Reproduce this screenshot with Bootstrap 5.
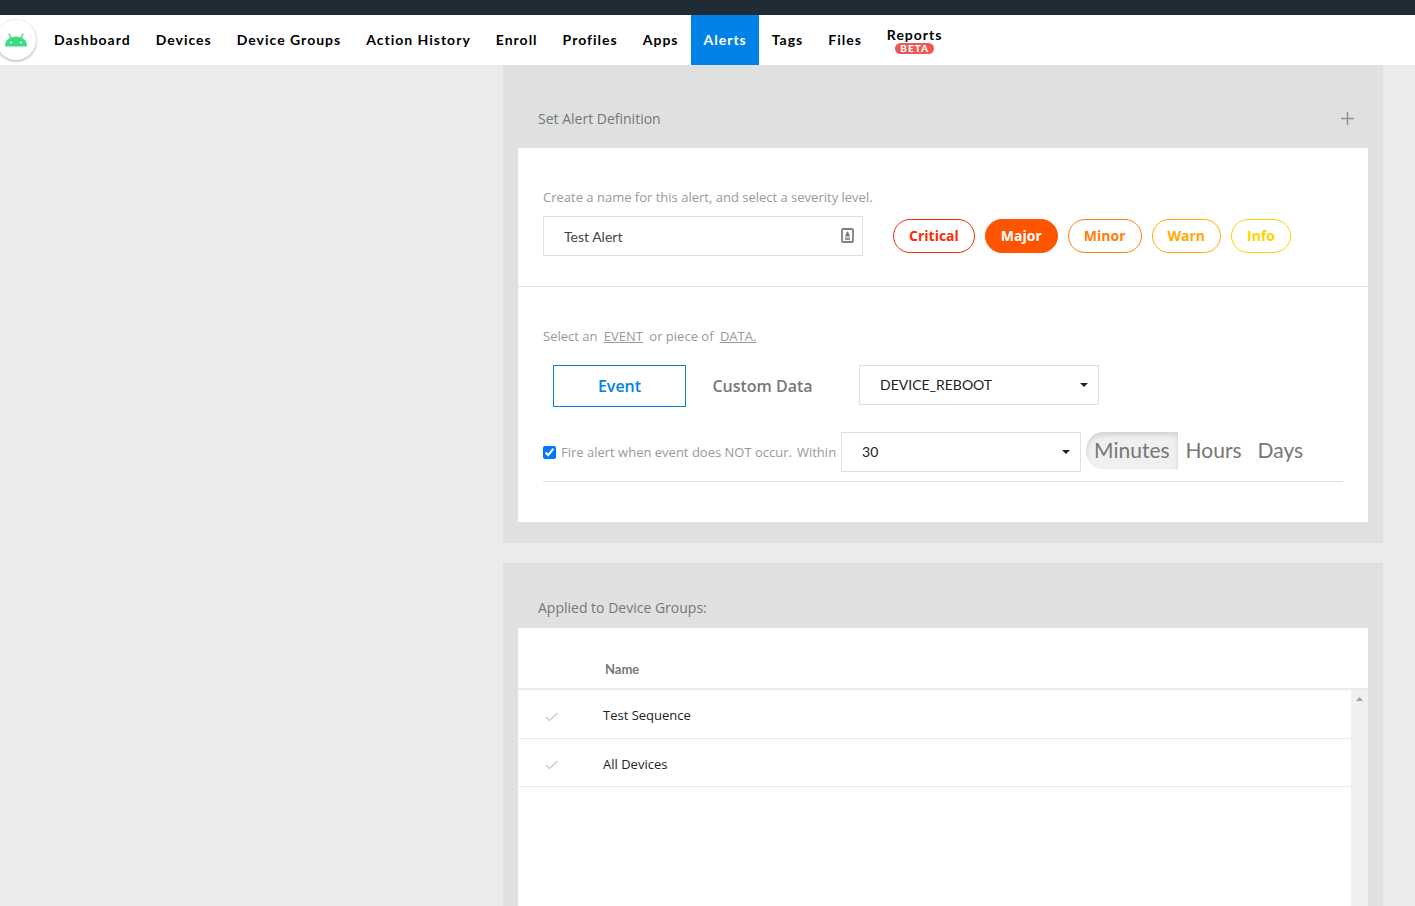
<!DOCTYPE html>
<html lang="en">
<head>
<meta charset="utf-8">
<meta name="viewport" content="width=device-width, initial-scale=1">
<title>Alerts</title>
<link href="https://cdn.jsdelivr.net/npm/bootstrap@5.3.0/dist/css/bootstrap.min.css" rel="stylesheet">
<style>
  body { background: #ebebeb; color: #7a7a7a; font: 13px/20px "Open Sans", sans-serif; }
  .topstrip { height: 15px; background: #1f2c35; }
  .mainnav { height: 50px; background: #fff; }
  .logo-disc { width: 40px; height: 40px; margin-left: -4px; border-radius: 50%; background: #fff; box-shadow: 0 1px 3px rgba(0,0,0,.35); }
  .mainnav .nav { margin-left: 5px; }
  .mainnav .nav-link { height: 50px; padding: 0 12px 0 13px; color: #000; font: 700 14px/16px Lato, sans-serif; letter-spacing: 1px; }
  .mainnav .nav-link.active { background: #0082e6; color: #fff; }
  .beta-tag { padding: 0 5px; border-radius: 6px; background: #f25555; color: #fff; font-size: 10px; line-height: 11px; font-weight: 900; }
  .workspace { width: 100%; max-width: 912px; padding-right: 32px; gap: 20px; }
  .panel { background: #dfe1e0; padding: 0 15px; }
  .panel-title { font-size: 14px; line-height: 20px; color: #777; margin: 0; font-weight: 400; }
  .panel-head { padding: 44px 13px 19px 20px; }
  .panel-head-tight { padding: 35px 13px 10px 20px; }
  .panel-first { padding-bottom: 21px; }
  .sheet { background: #fff; }
  .hint { color: #999; }
  .hint a { color: #999; margin: 0 3px; }
  .name-block { padding: 39px 25px 30px; border-bottom: 1px solid #dfe1e0; }
  .name-label { margin-bottom: 9px; }
  .severity { gap: 10px; margin-left: 30px; }
  .event-block { padding: 39px 25px 40px; }
  .field { height: 40px; border: 1px solid #dfe1e0; border-radius: 0; padding: 0 20px; color: #444; background-color: #fff; font: 14px/20px Lato, sans-serif; }
  .name-field { width: 320px; }
  .field-icon { right: 9px; top: 12px; }
  select.field { width: 240px; color: #222; background-image: url("data:image/svg+xml,%3Csvg xmlns='http://www.w3.org/2000/svg' viewBox='0 0 8 4'%3E%3Cpath d='M0 0h8L4 4z' fill='%23222'/%3E%3C/svg%3E"); background-size: 8px 4px; background-position: right 10px center; }
  .sev { height: 34px; padding: 0 15px; border-radius: 17px; font-size: 14px; line-height: 20px; font-weight: 700; border: 1px solid var(--tone); color: var(--tone); }
  .sev:hover, .sev.active { background: var(--tone) !important; border-color: var(--tone) !important; color: #fff !important; }
  .critical { --tone: #fa2d05; } .major { --tone: #ff5500; } .minor { --tone: #ff7f0e; } .warn { --tone: #ffa800; } .info { --tone: #ffd200; }
  .kind { width: 133px; height: 42px; border-radius: 0; font-size: 16px; font-weight: 600; color: #777; padding: 0; }
  .kind.active { border: 1px solid #0082d8 !important; background: #fff !important; color: #0082e6 !important; }
  .kind-row { padding-left: 10px; margin-top: 19px; gap: 10px; }
  .kind-row .field { margin-left: 20px; }
  .fire-row { margin-top: 25px; padding-bottom: 9px; border-bottom: 1px solid #dfe1e0; gap: 5px; }
  .fire-row input { width: 13px; height: 13px; accent-color: #0075ff; }
  .unit { height: 37px; padding: 0 8px 2px; border: 0; border-radius: 0; color: #777; font: 21px/35px Lato, sans-serif; }
  .unit.active { border-radius: 18px 0 0 18px; background: #f0f0f0 !important; color: #777 !important; box-shadow: inset 0 3px 5px #cfd3d3; }
  .groups { --bs-table-bg: transparent; margin: 0; color: #222; }
  .groups th { height: 61px; padding: 31px 2px 0; vertical-align: top; border-bottom: 2px solid #ebebeb; font: 700 13px/20px Lato, sans-serif; color: #777; }
  .groups td { height: 48px; padding: 3px 0 0; border-bottom: 1px solid #ebebeb; color: #222; vertical-align: middle; }
  .groups tbody tr:first-child td { height: 49px; }
  .groups .tick { width: 85px; padding-left: 27px; }
  .scrolltrack { top: 62px; right: 0; bottom: 0; width: 17px; padding-top: 7px; background: #f0f0f0; }
</style>
</head>
<body class="d-flex flex-column min-vh-100">
<div class="topstrip"></div>
<header class="mainnav d-flex align-items-center">
  <a href="#" class="logo-disc d-flex flex-shrink-0 align-items-center justify-content-center" aria-label="Home">
    <svg width="22" height="14" viewBox="0 0 22 14"><path d="M0 13.500C0 6.500 5 3.500 11 3.500s11 3 11 10z" fill="#3ddc84"/><path d="M4 1l3 5M18 1l-3 5" stroke="#3ddc84" stroke-width="1.400" stroke-linecap="round"/><circle cx="6" cy="9.500" r="1" fill="#fff"/><circle cx="16" cy="9.500" r="1" fill="#fff"/></svg>
  </a>
  <nav class="nav flex-nowrap" aria-label="Main">
    <a class="nav-link d-flex align-items-center" href="#">Dashboard</a>
    <a class="nav-link d-flex align-items-center" href="#">Devices</a>
    <a class="nav-link d-flex align-items-center text-nowrap" href="#">Device Groups</a>
    <a class="nav-link d-flex align-items-center text-nowrap" href="#">Action History</a>
    <a class="nav-link d-flex align-items-center" href="#">Enroll</a>
    <a class="nav-link d-flex align-items-center" href="#">Profiles</a>
    <a class="nav-link d-flex align-items-center" href="#">Apps</a>
    <a class="nav-link active d-flex align-items-center" aria-current="page" href="#">Alerts</a>
    <a class="nav-link d-flex align-items-center" href="#">Tags</a>
    <a class="nav-link d-flex align-items-center" href="#">Files</a>
    <a class="nav-link d-flex flex-column align-items-center justify-content-center" href="#">Reports<span class="beta-tag">BETA</span></a>
  </nav>
</header>

<main class="workspace ms-auto d-flex flex-column flex-grow-1">
  <section class="panel panel-first">
    <div class="panel-head d-flex justify-content-between align-items-center">
      <h2 class="panel-title">Set Alert Definition</h2>
      <button type="button" class="btn p-0 border-0 d-flex" aria-label="Add">
        <svg width="16" height="16" viewBox="0 0 16 16"><path d="M8.500 1v13M2 7.500h13" stroke="#929292" stroke-width="1.500"/></svg>
      </button>
    </div>
    <div class="sheet">
      <div class="name-block">
        <label class="name-label hint d-block" for="alertName">Create a name for this alert, and select a severity level.</label>
        <div class="d-flex flex-wrap align-items-center">
          <div class="name-field position-relative">
            <input id="alertName" class="field w-100" type="text" value="Test Alert">
            <svg class="field-icon position-absolute" width="13" height="16" viewBox="0 0 13 16"><rect x="1" y="1" width="11" height="13" rx="1" fill="none" stroke="#808080" stroke-width="1.800"/><path d="M6.500 3l1.300 2.500L9 8.500H4l1.200-3z" fill="#777"/><path d="M4 9.500h5v2.500H4z" fill="#999"/></svg>
          </div>
          <div class="severity d-flex">
            <button type="button" class="btn sev critical">Critical</button>
            <button type="button" class="btn sev major active">Major</button>
            <button type="button" class="btn sev minor">Minor</button>
            <button type="button" class="btn sev warn">Warn</button>
            <button type="button" class="btn sev info">Info</button>
          </div>
        </div>
      </div>
      <div class="event-block">
        <div class="hint">Select an <a href="#">EVENT</a> or piece of <a href="#">DATA.</a></div>
        <div class="kind-row d-flex flex-wrap">
          <button type="button" class="btn kind active">Event</button>
          <button type="button" class="btn kind">Custom Data</button>
          <select class="form-select field" aria-label="Event type"><option>DEVICE_REBOOT</option></select>
        </div>
        <div class="fire-row d-flex flex-wrap align-items-center">
          <input type="checkbox" id="fire" checked>
          <label class="hint" for="fire">Fire alert when event does NOT occur.</label>
          <label class="hint" for="within">Within</label>
          <select id="within" class="form-select field"><option>30</option></select>
          <div class="d-flex align-self-start" role="group" aria-label="Time unit">
            <button type="button" class="btn unit active">Minutes</button>
            <button type="button" class="btn unit">Hours</button>
            <button type="button" class="btn unit">Days</button>
          </div>
        </div>
      </div>
    </div>
  </section>

  <section class="panel d-flex flex-column flex-grow-1">
    <div class="panel-head-tight"><h2 class="panel-title" id="groupsTitle">Applied to Device Groups:</h2></div>
    <div class="sheet position-relative flex-grow-1">
      <table class="table groups" aria-labelledby="groupsTitle">
        <thead><tr><th class="tick"></th><th>Name</th></tr></thead>
        <tbody>
          <tr><td class="tick"><svg width="14" height="10" viewBox="0 0 14 10"><path d="M1 5l3.500 3.500L12.500 1" fill="none" stroke="#ccc" stroke-width="1.500"/></svg></td><td>Test Sequence</td></tr>
          <tr><td class="tick"><svg width="14" height="10" viewBox="0 0 14 10"><path d="M1 5l3.500 3.500L12.500 1" fill="none" stroke="#ccc" stroke-width="1.500"/></svg></td><td>All Devices</td></tr>
        </tbody>
      </table>
      <div class="scrolltrack position-absolute d-flex justify-content-center align-items-start">
        <svg width="7" height="4" viewBox="0 0 7 4"><path d="M0 4L3.500 0 7 4z" fill="#a3a3a3"/></svg>
      </div>
    </div>
  </section>
</main>
<script src="https://cdn.jsdelivr.net/npm/bootstrap@5.3.0/dist/js/bootstrap.bundle.min.js"></script>
</body>
</html>
